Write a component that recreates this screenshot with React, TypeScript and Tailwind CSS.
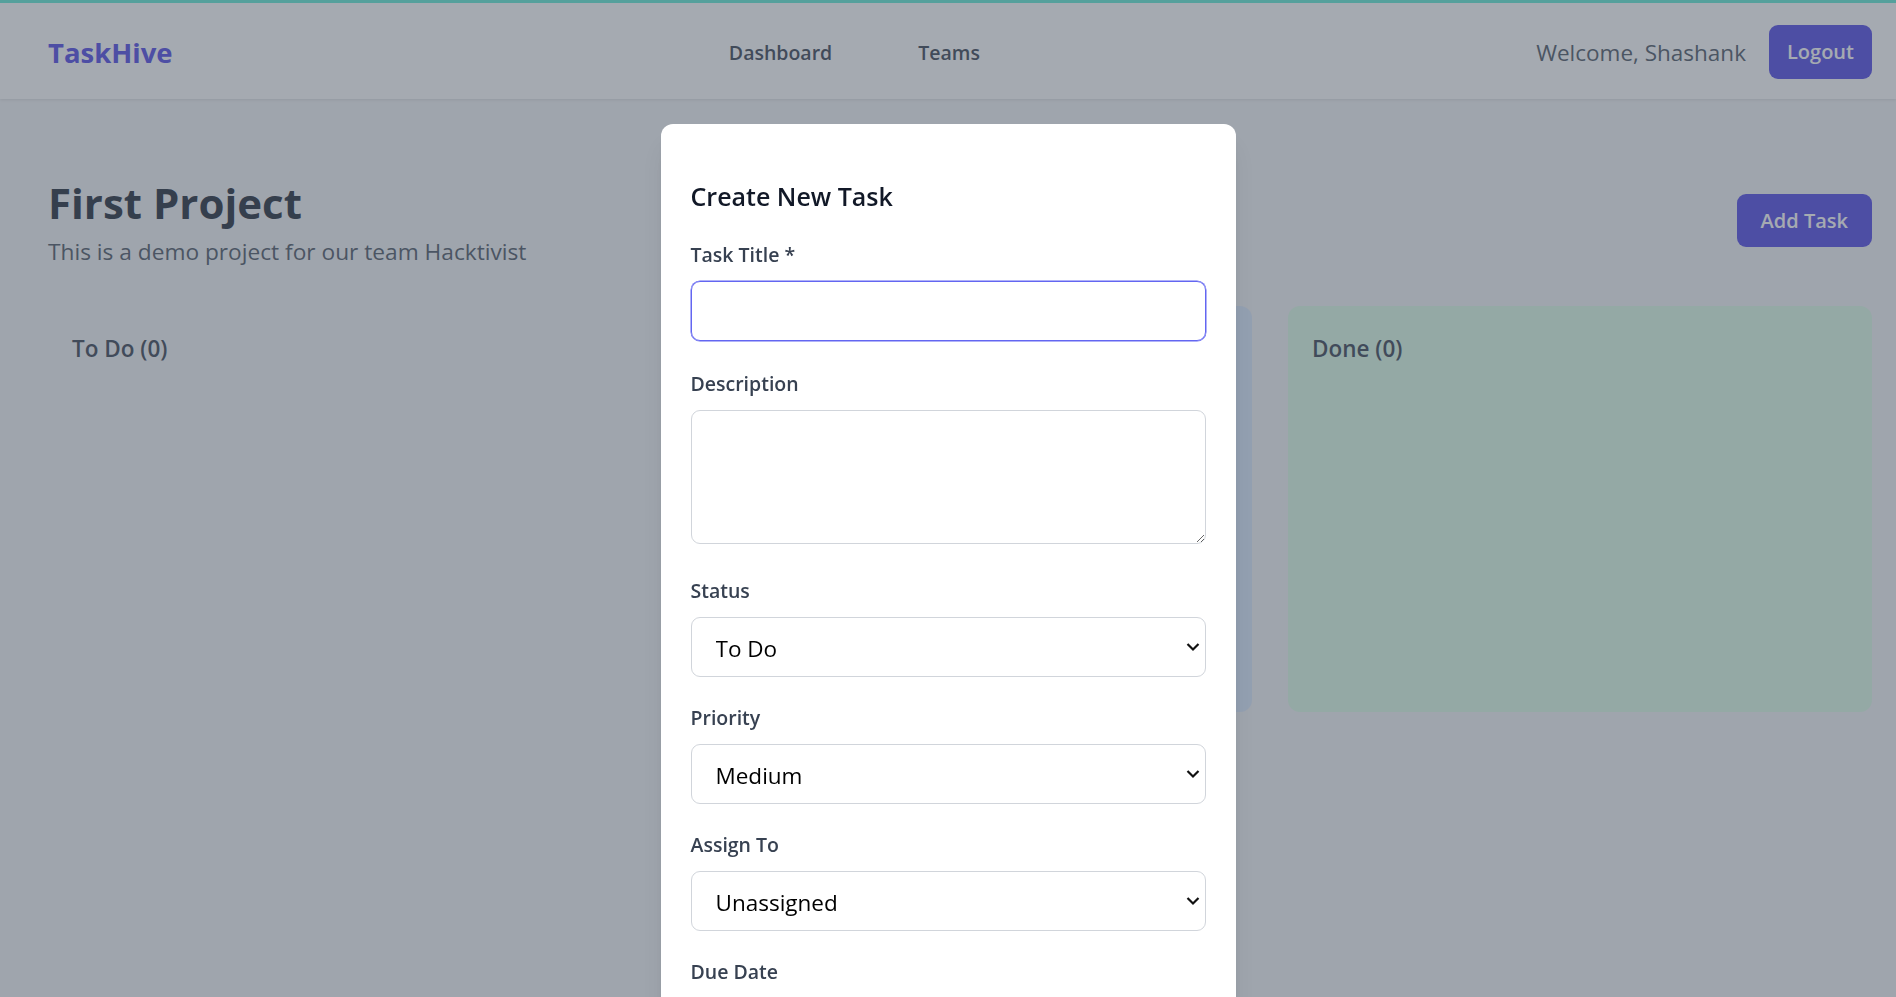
function Field({ label, children, className = '' }: { label: string; children: React.ReactNode; className?: string }) {
  return (
    <div className={className}>
      <label className="mb-[11px] block text-[19.5px] font-semibold leading-[30px] text-[#374151]">{label}</label>
      {children}
    </div>
  );
}

function Select({ value, options }: { value: string; options: string[] }) {
  return (
    <div className="relative">
      <select
        defaultValue={value}
        className="block h-[60px] w-full appearance-none rounded-[9px] border border-[#d1d5db] bg-white pl-[24px] pt-[3px] text-[22.5px] text-black outline-none"
      >
        {options.map((o) => (
          <option key={o}>{o}</option>
        ))}
      </select>
      <svg
        className="pointer-events-none absolute right-[6px] top-1/2 -translate-y-1/2"
        width="14"
        height="9"
        viewBox="0 0 14 9"
        fill="none"
      >
        <path d="M1.5 1.5 L7 7 L12.5 1.5" stroke="#111" strokeWidth="2.2" />
      </svg>
    </div>
  );
}

export default function App() {
  return (
    <div className="relative min-h-screen overflow-hidden bg-[#f3f4f6] font-['Open_Sans',sans-serif]">
      <nav className="flex h-[99px] items-center justify-between border-t-[3px] border-[#5eead4] bg-white pl-[48px] pr-[24px] pt-[4px] shadow-[0_1px_3px_rgba(0,0,0,0.1)]">
        <span className="text-[27.5px] font-bold text-[#4f46e5]">TaskHive</span>
        <div className="flex gap-[86px] text-[19.5px] font-semibold text-[#374151]">
          <span>Dashboard</span>
          <span>Teams</span>
        </div>
        <div className="flex items-center gap-[23px]">
          <span className="text-[22.5px] text-[#4b5563]">Welcome, Shashank</span>
          <button className="-mt-[2px] h-[54px] rounded-[9px] bg-[#4f46e5] px-[18px] text-[20px] font-semibold text-white">
            Logout
          </button>
        </div>
      </nav>

      <main className="pl-[48px] pr-[24px] pt-[77px] pb-[48px]">
        <div className="flex items-center justify-between">
          <div>
            <h1 className="text-[42px] font-bold leading-[54px] text-[#1f2937]">First Project</h1>
            <p className="mt-[4px] text-[22.7px] leading-[36px] text-[#4b5563]">
              This is a demo project for our team Hacktivist
            </p>
          </div>
          <button className="mb-[5px] h-[53px] rounded-[9px] bg-[#4f46e5] px-[24px] text-[20px] font-semibold text-white">
            Add Task
          </button>
        </div>

        <div className="mt-[36px] grid grid-cols-3 gap-[36px]">
          <div className="h-[406px] rounded-[12px] bg-[#f3f4f6] p-[24px]">
            <h2 className="text-[22.5px] font-semibold leading-[38px] text-[#374151]">To Do (0)</h2>
          </div>
          <div className="h-[406px] rounded-[12px] bg-[#dbeafe] p-[24px]" />
          <div className="h-[406px] rounded-[12px] bg-[#dcfce7] p-[24px]">
            <h2 className="text-[22.5px] font-semibold leading-[38px] text-[#374151]">Done (0)</h2>
          </div>
        </div>
      </main>

      <div className="fixed inset-0 flex justify-center overflow-hidden bg-[#4b5563]/50">
        <div className="mt-[124px] h-fit w-[575px] rounded-[12px] bg-white px-[30px] pb-[30px] pt-[52px] shadow-xl">
          <h3 className="mb-[24px] text-[25px] font-semibold leading-[40px] text-[#111827]">Create New Task</h3>
          <Field label="Task Title *">
            <input className="block h-[60px] w-full rounded-[9px] border border-[#6366f1] px-[18px] text-[22.5px] shadow-[0_0_0_0.5px_#6366f1] outline-none" />
          </Field>
          <Field label="Description" className="mt-[28px]">
            <textarea className="block h-[134px] w-full rounded-[9px] border border-[#d1d5db] px-[18px] py-[12px] text-[22.5px] outline-none" />
          </Field>
          <Field label="Status" className="mt-[32px]">
            <Select value="To Do" options={['To Do', 'In Progress', 'Done']} />
          </Field>
          <Field label="Priority" className="mt-[26px]">
            <Select value="Medium" options={['Low', 'Medium', 'High']} />
          </Field>
          <Field label="Assign To" className="mt-[26px]">
            <Select value="Unassigned" options={['Unassigned', 'Shashank']} />
          </Field>
          <Field label="Due Date" className="mt-[26px]">
            <input className="block h-[60px] w-full rounded-[9px] border border-[#d1d5db] px-[18px] text-[22.5px]" />
          </Field>
        </div>
      </div>
    </div>
  );
}
